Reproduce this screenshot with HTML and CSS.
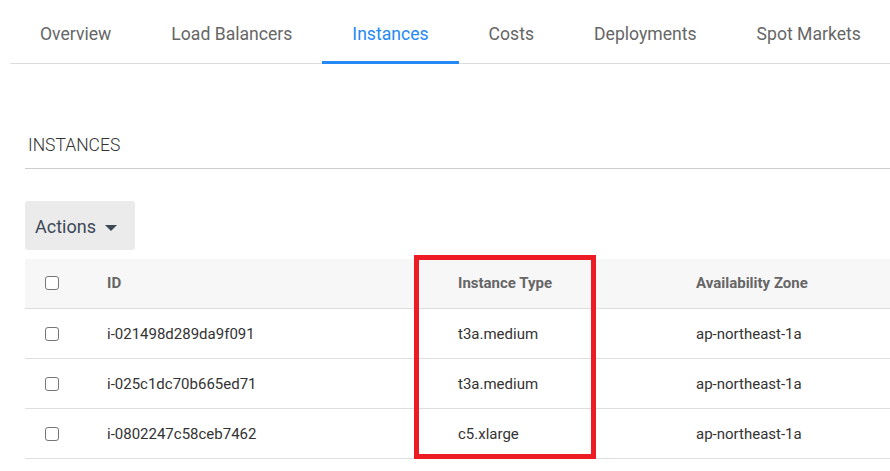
FILE: index.html
```html
<!DOCTYPE html>
<html lang="en">
<head>
<meta charset="utf-8">
<title>Instances</title>
<link rel="stylesheet" href="styles.css">
</head>
<body>
<nav class="tabs">
  <a class="tab">Overview</a>
  <a class="tab">Load Balancers</a>
  <a class="tab active">Instances</a>
  <a class="tab">Costs</a>
  <a class="tab">Deployments</a>
  <a class="tab">Spot Markets</a>
</nav>
<main class="content">
  <h2 class="section-title">INSTANCES</h2>
  <button class="actions">Actions <span class="caret"></span></button>
  <div class="table-wrap">
    <div class="table">
      <div class="row head">
        <div class="cell check"><span class="box"></span></div>
        <div class="cell">ID</div>
        <div class="cell">Instance Type</div>
        <div class="cell">Availability Zone</div>
      </div>
      <div class="row">
        <div class="cell check"><span class="box"></span></div>
        <div class="cell">i-021498d289da9f091</div>
        <div class="cell">t3a.medium</div>
        <div class="cell">ap-northeast-1a</div>
      </div>
      <div class="row">
        <div class="cell check"><span class="box"></span></div>
        <div class="cell">i-025c1dc70b665ed71</div>
        <div class="cell">t3a.medium</div>
        <div class="cell">ap-northeast-1a</div>
      </div>
      <div class="row">
        <div class="cell check"><span class="box"></span></div>
        <div class="cell">i-0802247c58ceb7462</div>
        <div class="cell">c5.xlarge</div>
        <div class="cell">ap-northeast-1a</div>
      </div>
    </div>
    <div class="highlight"></div>
  </div>
</main>
</body>
</html>
```

FILE: styles.css
```css
* { box-sizing: border-box; }
html, body { margin: 0; padding: 0; background: #fff; }
body {
  font-family: Roboto, "Noto Sans", sans-serif;
  width: 890px;
  height: 471px;
  overflow: hidden;
}

.tabs {
  display: flex;
  margin-left: 10px;
  height: 64px;
  border-bottom: 1px solid #dddddd;
}
.tab {
  display: flex;
  align-items: center;
  height: 64px;
  padding: 7px 30px 0;
  font-size: 17.6px;
  color: #666;
  white-space: nowrap;
  border-bottom: 3px solid transparent;
  margin-bottom: -1px;
}
.tab.active {
  color: #2489f5;
  border-bottom-color: #2489f5;
}

.content {
  padding-left: 25px;
}
.section-title {
  margin: 69px 0 0;
  padding: 0 0 11px 3px;
  font-size: 17.5px;
  line-height: 24px;
  font-weight: 300;
  color: #333;
  border-bottom: 1px solid #cccccc;
}

.actions {
  display: flex;
  align-items: center;
  gap: 9px;
  margin-top: 32px;
  width: 110px;
  height: 49px;
  padding: 2px 0 0 10px;
  border: none;
  border-radius: 3px;
  background: #ebebeb;
  font-family: Roboto, "Noto Sans", sans-serif;
  font-size: 18px;
  color: #3b4856;
}
.caret {
  width: 0;
  height: 0;
  border-left: 6px solid transparent;
  border-right: 6px solid transparent;
  border-top: 6px solid #3b4856;
  margin-top: 2px;
}

.table-wrap {
  position: relative;
  margin-top: 9px;
}
.table {
  width: 865px;
}
.row {
  display: grid;
  grid-template-columns: 82px 351px 238px 1fr;
  height: 50px;
  border-bottom: 1px solid #dedede;
  align-items: center;
  font-size: 15px;
  color: #333;
  padding-top: 1px;
}
.row.head {
  background: #f7f7f7;
  font-weight: 700;
  color: #666;
  padding-top: 0;
  padding-bottom: 1px;
}
.cell {
  white-space: nowrap;
}
.check {
  padding-left: 20px;
  display: flex;
  align-items: center;
}
.box {
  display: block;
  width: 14px;
  height: 14px;
  border: 1.5px solid #767676;
  border-radius: 3px;
  background: #fff;
}

.highlight {
  position: absolute;
  left: 389px;
  top: -4px;
  width: 182px;
  height: 204px;
  border: 5px solid #ed1c24;
}
```
